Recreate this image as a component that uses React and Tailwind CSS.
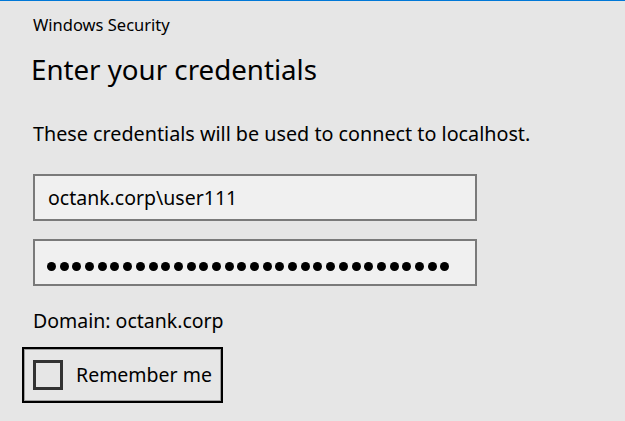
export default function App() {
  const dots = Array.from({ length: 32 });
  return (
    <div
      className="w-[625px] h-[421px] bg-[#e6e6e6] border-t border-[#0078d7] overflow-hidden text-black"
      style={{ fontFamily: '"Noto Sans", "Open Sans", sans-serif' }}
    >
      <div className="pl-[33px] pt-[13px] text-[16.5px] leading-[22px]">Windows Security</div>
      <div className="pl-[31px] pt-[15px] text-[27.7px] leading-[36px]">Enter your credentials</div>
      <div className="pl-[33px] pt-[34px] text-[19.75px] leading-[26px]">
        These credentials will be used to connect to localhost.
      </div>
      <div className="pl-[33px] pt-[27px] flex flex-col gap-[18px]">
        <div className="w-[444px] h-[47px] border-2 border-[#7a7a7a] bg-[#f0f0f0] flex items-center px-[13px] text-[19.5px]">
          octank.corp\user111
        </div>
        <div className="w-[444px] h-[47px] border-2 border-[#7a7a7a] bg-[#f0f0f0] flex items-center px-[12px] pt-[8px] gap-[3.7px]">
          {dots.map((_, i) => (
            <span key={i} className="w-[9px] h-[9px] rounded-full bg-black shrink-0" />
          ))}
        </div>
      </div>
      <div className="pl-[33px] pt-[22px] text-[19.5px] leading-[26px]">Domain: octank.corp</div>
      <div className="pl-[22px] pt-[13px]">
        <div className="w-[201px] h-[56px] border-2 border-black">
          <div className="w-full h-full border border-[#a0a0a0] flex items-center pl-[8px] gap-[13px]">
            <div className="w-[30px] h-[30px] border-[3px] border-[#333333]" />
            <span className="text-[19.5px] leading-[24px]">Remember me</span>
          </div>
        </div>
      </div>
    </div>
  );
}
